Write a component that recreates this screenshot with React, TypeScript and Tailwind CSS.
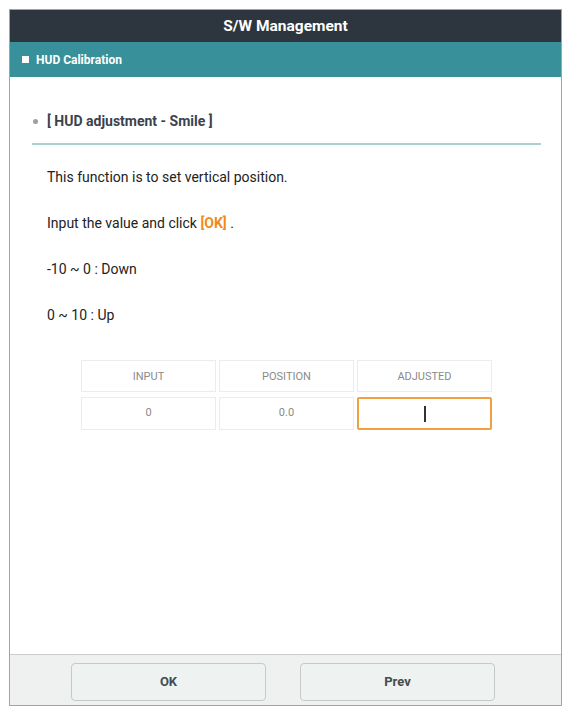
import React from "react";

export default function App() {
  const font = { fontFamily: "Roboto, 'Noto Sans', sans-serif" };
  return (
    <div className="w-[571px] h-[715px] bg-white pt-[9px] pl-[9px]" style={font}>
      <div className="w-[553px] h-[697px] border border-[#a3a3a3] flex flex-col">
        <div className="h-[32px] pt-[2px] bg-[#2d363f] flex items-center justify-center text-white font-bold text-[15.5px]">
          S/W Management
        </div>
        <div className="h-[35px] bg-[#37909a] flex items-center pl-[12px] gap-[7px]">
          <div className="w-[7px] h-[7px] bg-white" />
          <span className="text-white font-bold text-[12px]">HUD Calibration</span>
        </div>
        <div className="flex-1 bg-white flex flex-col">
          <div className="mt-[34px] ml-[22px] mr-[20px] h-[20px] flex items-center">
            <div className="w-[5px] h-[5px] rounded-full bg-[#9aa0a5] ml-[1px]" />
            <span className="ml-[9px] font-bold text-[14px] text-[#3a424c]">[ HUD adjustment - Smile ]</span>
          </div>
          <div className="mt-[12px] ml-[22px] mr-[20px] h-[2px] bg-[#a8d1d0]" />
          <div className="pl-[37px] text-[14px] text-[#222] flex flex-col mt-[9px]">
            <div className="h-[46px] flex items-center">This function is to set vertical position.</div>
            <div className="h-[46px] flex items-center">
              Input the value and click&nbsp;<span className="text-[#f08a1c] font-bold">[OK]</span>&nbsp;.
            </div>
            <div className="h-[46px] flex items-center">-10 ~ 0 : Down</div>
            <div className="h-[46px] flex items-center">0 ~ 10 : Up</div>
          </div>
          <div className="ml-[71px] mt-[22px] w-[411px] grid grid-cols-3 gap-x-[3px] gap-y-[5px] text-[11px] text-[#8a8a8a]">
            <div className="h-[32px] pt-[2px] border border-[#ececec] flex items-center justify-center">INPUT</div>
            <div className="h-[32px] pt-[2px] border border-[#ececec] flex items-center justify-center">POSITION</div>
            <div className="h-[32px] pt-[2px] border border-[#ececec] flex items-center justify-center">ADJUSTED</div>
            <div className="h-[33px] border border-[#ececec] flex items-center justify-center">0</div>
            <div className="h-[33px] border border-[#ececec] flex items-center justify-center">0.0</div>
            <div className="h-[33px] border-2 border-[#f0a040] rounded-[2px] flex items-center justify-center">
              <div className="w-[2px] h-[16px] bg-[#333]" />
            </div>
          </div>
        </div>
        <div className="h-[51px] bg-[#eef1f0] border-t border-[#c9cdcc] flex items-start pt-[8px] pl-[61px] gap-[34px]">
          <button className="w-[195px] h-[38px] rounded-[4px] border border-[#c6caca] bg-[#eef2f1] font-bold text-[13px] text-[#454b52]">
            OK
          </button>
          <button className="w-[195px] h-[38px] rounded-[4px] border border-[#c6caca] bg-[#eef2f1] font-bold text-[13px] text-[#454b52]">
            Prev
          </button>
        </div>
      </div>
    </div>
  );
}
